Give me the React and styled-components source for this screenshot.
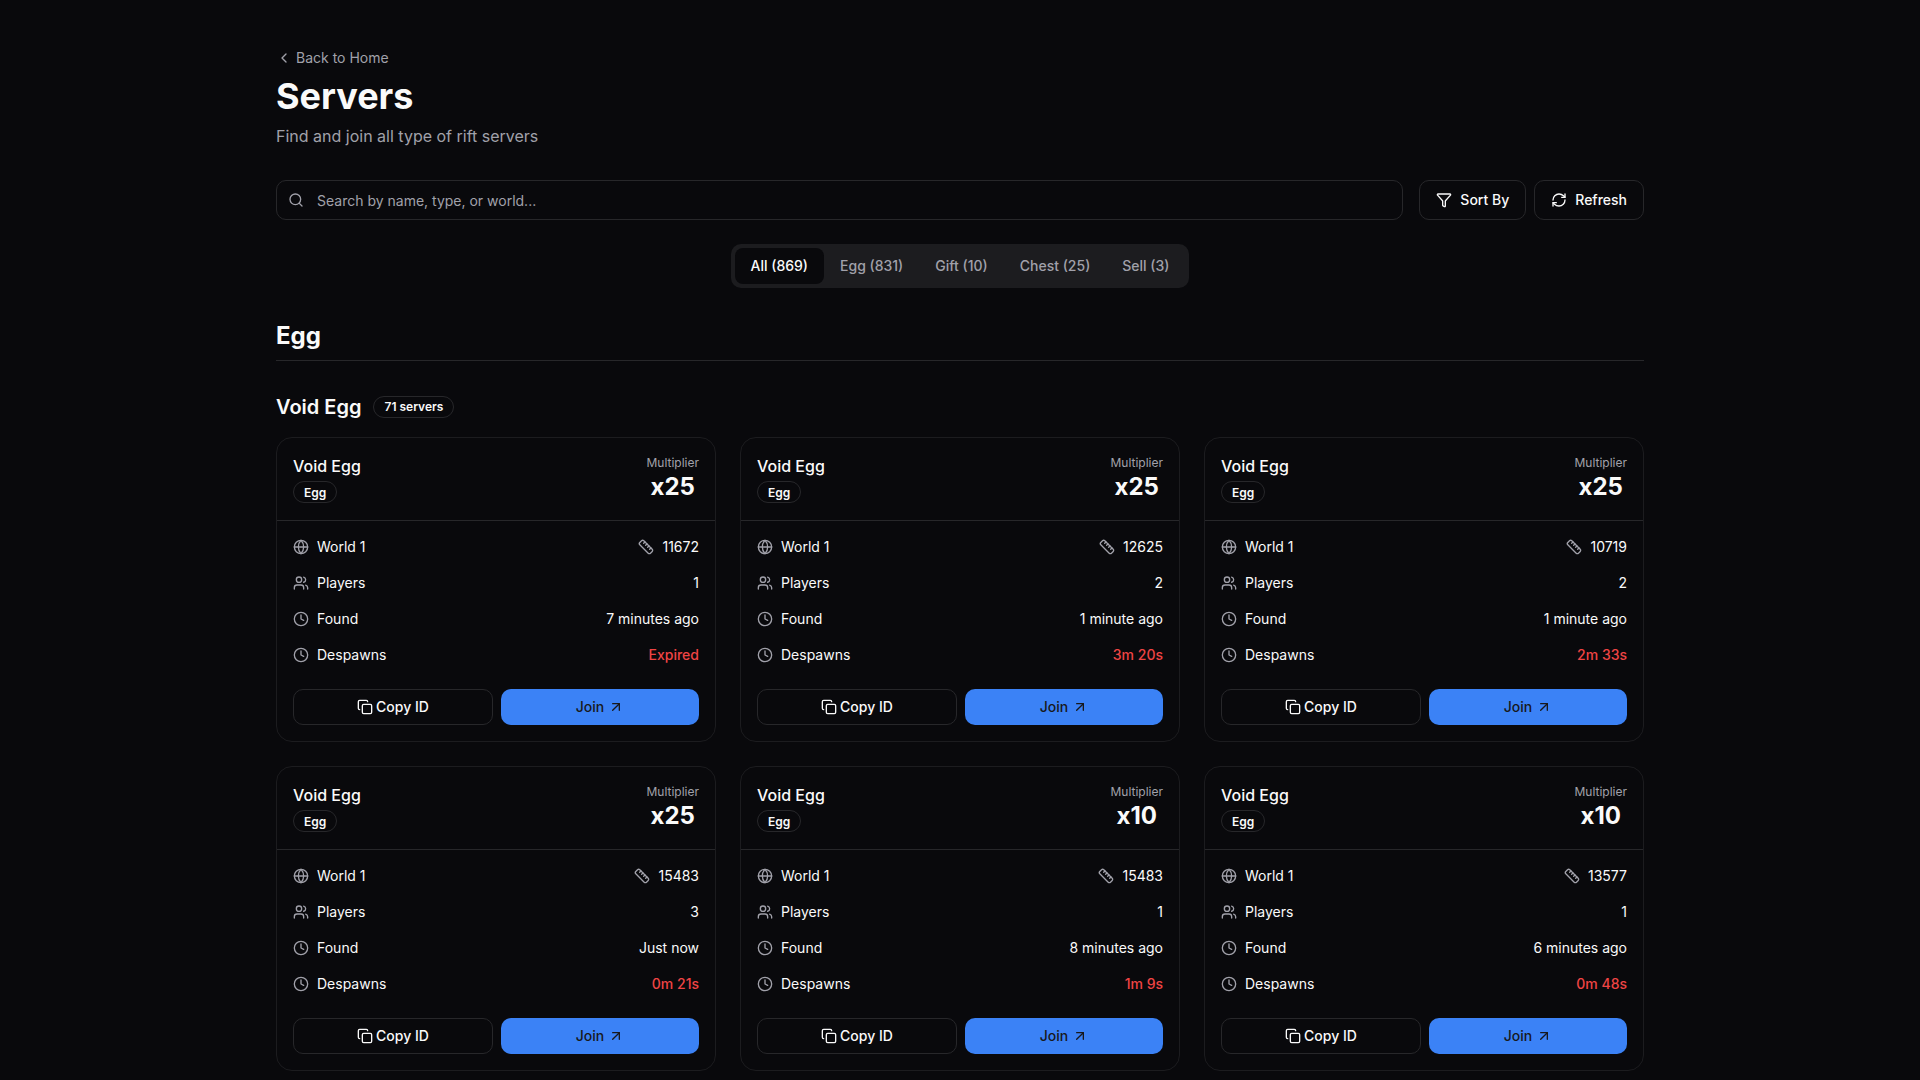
import React from 'react';
import styled, { createGlobalStyle } from 'styled-components';
import {
  ChevronLeft,
  Search,
  Filter,
  RefreshCw,
  Globe,
  Ruler,
  Users,
  Clock,
  Copy,
  ArrowUpRight,
} from 'lucide-react';

const GlobalStyle = createGlobalStyle`
  html, body {
    margin: 0;
    padding: 0;
    background: #09090c;
  }
  * {
    box-sizing: border-box;
  }
  body {
    font-family: Inter, "Liberation Sans", sans-serif;
    color: #fafafa;
  }
`;

const servers = [
  { mult: 'x25', id: '11672', players: 1, found: '7 minutes ago', despawn: 'Expired' },
  { mult: 'x25', id: '12625', players: 2, found: '1 minute ago', despawn: '3m 20s' },
  { mult: 'x25', id: '10719', players: 2, found: '1 minute ago', despawn: '2m 33s' },
  { mult: 'x25', id: '15483', players: 3, found: 'Just now', despawn: '0m 21s' },
  { mult: 'x10', id: '15483', players: 1, found: '8 minutes ago', despawn: '1m 9s' },
  { mult: 'x10', id: '13577', players: 1, found: '6 minutes ago', despawn: '0m 48s' },
];

const tabs = ['All (869)', 'Egg (831)', 'Gift (10)', 'Chest (25)', 'Sell (3)'];

const ServerCard = ({ server }) => (
  <Card>
    <CardHeader>
      <div>
        <CardTitle>Void Egg</CardTitle>
        <TypeBadge>Egg</TypeBadge>
      </div>
      <MultiplierBox>
        <MultiplierLabel>Multiplier</MultiplierLabel>
        <MultiplierValue>{server.mult}</MultiplierValue>
      </MultiplierBox>
    </CardHeader>
    <CardBody>
      <InfoRow>
        <InfoLabel><Globe size={16} />World 1</InfoLabel>
        <InfoValue><Ruler size={16} />{server.id}</InfoValue>
      </InfoRow>
      <InfoRow>
        <InfoLabel><Users size={16} />Players</InfoLabel>
        <InfoValue>{server.players}</InfoValue>
      </InfoRow>
      <InfoRow>
        <InfoLabel><Clock size={16} />Found</InfoLabel>
        <InfoValue>{server.found}</InfoValue>
      </InfoRow>
      <InfoRow>
        <InfoLabel><Clock size={16} />Despawns</InfoLabel>
        <InfoValue $danger>{server.despawn}</InfoValue>
      </InfoRow>
      <ButtonRow>
        <CopyButton><Copy size={16} />Copy ID</CopyButton>
        <JoinButton>Join<ArrowUpRight size={16} /></JoinButton>
      </ButtonRow>
    </CardBody>
  </Card>
);

const App = () => (
  <>
    <GlobalStyle />
    <Page>
      <BackLink><ChevronLeft size={16} />Back to Home</BackLink>
      <Title>Servers</Title>
      <Subtitle>Find and join all type of rift servers</Subtitle>
      <Toolbar>
        <SearchBox>
          <Search size={16} />
          <SearchInput placeholder="Search by name, type, or world..." readOnly />
        </SearchBox>
        <ToolButton><Filter size={16} />Sort By</ToolButton>
        <ToolButton><RefreshCw size={16} />Refresh</ToolButton>
      </Toolbar>
      <TabsWrap>
        <TabsList>
          {tabs.map((t, i) => (
            <Tab key={t} $active={i === 0}>{t}</Tab>
          ))}
        </TabsList>
      </TabsWrap>
      <SectionTitle>Egg</SectionTitle>
      <GroupHeader>
        <GroupTitle>Void Egg</GroupTitle>
        <CountBadge>71 servers</CountBadge>
      </GroupHeader>
      <CardGrid>
        {servers.map((s, i) => (
          <ServerCard key={i} server={s} />
        ))}
      </CardGrid>
    </Page>
  </>
);

const Page = styled.div`
  max-width: 1400px;
  margin: 0 auto;
  padding: 47px 16px 32px;
`;

const BackLink = styled.a`
  display: flex;
  align-items: center;
  gap: 4px;
  height: 21px;
  font-size: 14px;
  color: #a1a1aa;
  svg {
    margin-top: 1px;
  }
`;

const Title = styled.h1`
  margin: 8px 0 0;
  font-size: 36px;
  line-height: 40px;
  font-weight: 700;
  color: #fafafa;
`;

const Subtitle = styled.p`
  margin: 8px 0 0;
  font-size: 16px;
  line-height: 24px;
  color: #a1a1aa;
`;

const Toolbar = styled.div`
  display: flex;
  align-items: center;
  gap: 8px;
  margin-top: 32px;
`;

const SearchBox = styled.div`
  flex: 1;
  display: flex;
  align-items: center;
  gap: 13px;
  height: 40px;
  margin-right: 8px;
  padding: 0 11px;
  border: 1px solid #27272a;
  border-radius: 10px;
  color: #a1a1aa;
`;

const SearchInput = styled.input`
  flex: 1;
  padding: 0;
  background: transparent;
  border: 0;
  outline: 0;
  font-family: inherit;
  font-size: 14px;
  color: #fafafa;
  &::placeholder {
    color: #a1a1aa;
  }
`;

const ToolButton = styled.button`
  display: flex;
  align-items: center;
  gap: 8px;
  height: 40px;
  padding: 0 16px 1px;
  background: transparent;
  border: 1px solid #27272a;
  border-radius: 10px;
  font-family: inherit;
  font-size: 14px;
  font-weight: 500;
  color: #fafafa;
`;

const TabsWrap = styled.div`
  display: flex;
  justify-content: center;
  margin-top: 24px;
`;

const TabsList = styled.div`
  display: flex;
  padding: 4px;
  background: #1c1c1f;
  border-radius: 10px;
`;

const Tab = styled.div`
  display: flex;
  align-items: center;
  height: 36px;
  padding: 0 16px 1px;
  border-radius: 8px;
  font-size: 14px;
  font-weight: 500;
  color: ${(p) => (p.$active ? '#fafafa' : '#a1a1aa')};
  background: ${(p) => (p.$active ? '#09090c' : 'transparent')};
`;

const SectionTitle = styled.h2`
  margin: 32px 0 0;
  padding-bottom: 8px;
  border-bottom: 1px solid #27272a;
  font-size: 24px;
  line-height: 32px;
  font-weight: 700;
`;

const GroupHeader = styled.div`
  display: flex;
  align-items: center;
  gap: 12px;
  margin-top: 32px;
`;

const GroupTitle = styled.h3`
  margin: 0;
  font-size: 20px;
  line-height: 28px;
  font-weight: 600;
`;

const CountBadge = styled.span`
  display: inline-flex;
  align-items: center;
  height: 22px;
  padding: 0 10px 1px;
  border: 1px solid #27272a;
  border-radius: 999px;
  font-size: 12px;
  font-weight: 600;
`;

const CardGrid = styled.div`
  display: grid;
  grid-template-columns: repeat(3, 1fr);
  gap: 24px;
  margin-top: 16px;
`;

const Card = styled.div`
  border: 1px solid #1c1c1f;
  border-radius: 16px;
  background: #09090c;
`;

const CardHeader = styled.div`
  display: flex;
  justify-content: space-between;
  height: 83px;
  padding: 16px;
  border-bottom: 1px solid #27272a;
`;

const CardTitle = styled.div`
  font-size: 16px;
  line-height: 24px;
  font-weight: 500;
`;

const TypeBadge = styled.span`
  display: inline-flex;
  align-items: center;
  height: 22px;
  margin-top: 3px;
  padding: 0 10px;
  border: 1px solid #27272a;
  border-radius: 999px;
  font-size: 12px;
  font-weight: 600;
`;

const MultiplierBox = styled.div`
  display: flex;
  flex-direction: column;
  align-items: center;
  padding-top: 1px;
`;

const MultiplierLabel = styled.div`
  font-size: 12px;
  line-height: 16px;
  color: #a1a1aa;
`;

const MultiplierValue = styled.div`
  margin-top: 2px;
  font-size: 24px;
  line-height: 28px;
  font-weight: 700;
`;

const CardBody = styled.div`
  display: flex;
  flex-direction: column;
  padding: 7px 16px 16px;
`;

const InfoRow = styled.div`
  display: flex;
  align-items: center;
  justify-content: space-between;
  height: 36px;
  font-size: 14px;
  svg {
    margin-top: 2px;
    color: #a1a1aa;
  }
`;

const InfoLabel = styled.div`
  display: flex;
  align-items: center;
  gap: 8px;
`;

const InfoValue = styled.div`
  display: flex;
  align-items: center;
  gap: 8px;
  color: ${(p) => (p.$danger ? '#ef4444' : '#fafafa')};
  font-weight: ${(p) => (p.$danger ? 500 : 400)};
`;

const ButtonRow = styled.div`
  display: grid;
  grid-template-columns: 1.01fr 1fr;
  gap: 8px;
  margin-top: 17px;
`;

const CopyButton = styled.button`
  display: flex;
  align-items: center;
  justify-content: center;
  gap: 3px;
  height: 36px;
  padding: 0 0 1px;
  background: transparent;
  border: 1px solid #27272a;
  border-radius: 10px;
  font-family: inherit;
  font-size: 14px;
  font-weight: 500;
  color: #fafafa;
`;

const JoinButton = styled.button`
  display: flex;
  align-items: center;
  justify-content: center;
  gap: 4px;
  height: 36px;
  padding: 0 0 1px;
  background: #3b82f6;
  border: 0;
  border-radius: 10px;
  font-family: inherit;
  font-size: 14px;
  font-weight: 500;
  color: #18181b;
`;

export default App;
